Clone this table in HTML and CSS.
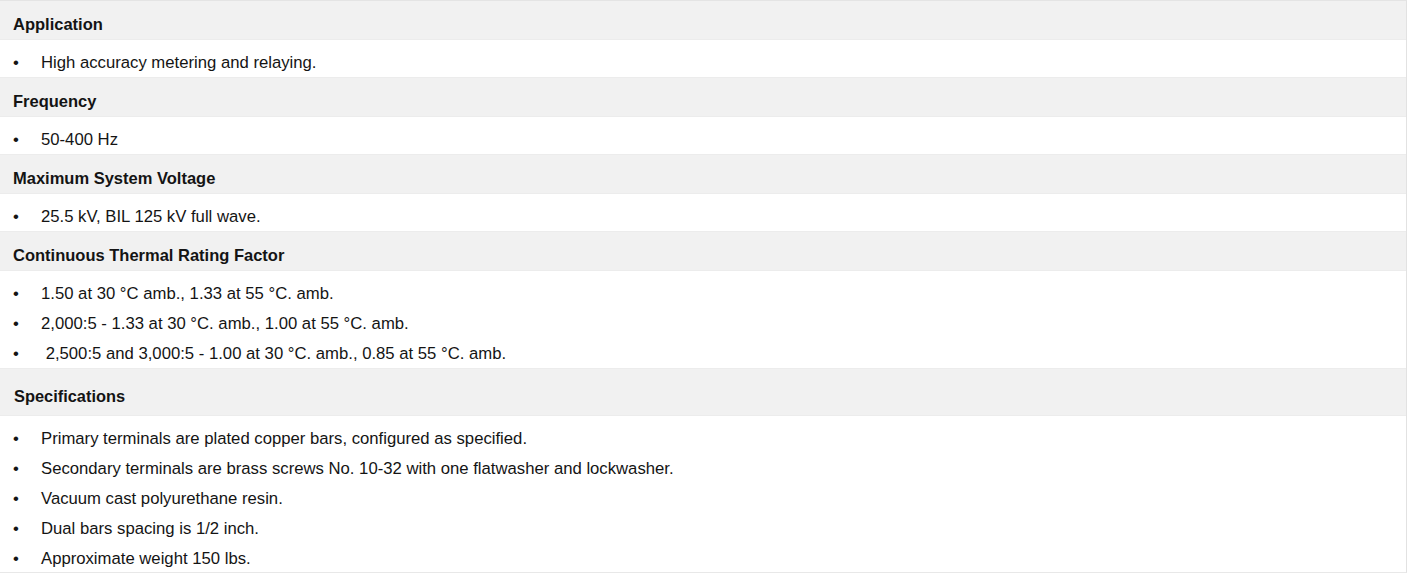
FILE: index.html
```html
<!DOCTYPE html>
<html>
<head>
<meta charset="utf-8">
<link rel="stylesheet" href="styles.css">
</head>
<body>
<div class="spec">
  <div class="head">Application</div>
  <ul class="body"><li>High accuracy metering and relaying.</li></ul>
  <div class="head">Frequency</div>
  <ul class="body"><li>50-400 Hz</li></ul>
  <div class="head">Maximum System Voltage</div>
  <ul class="body"><li>25.5 kV, BIL 125 kV full wave.</li></ul>
  <div class="head">Continuous Thermal Rating Factor</div>
  <ul class="body">
    <li>1.50 at 30 °C amb., 1.33 at 55 °C. amb.</li>
    <li>2,000:5 - 1.33 at 30 °C. amb., 1.00 at 55 °C. amb.</li>
    <li>&nbsp;2,500:5 and 3,000:5 - 1.00 at 30 °C. amb., 0.85 at 55 °C. amb.</li>
  </ul>
  <div class="head head-tall">Specifications</div>
  <ul class="body body-narrow">
    <li>Primary terminals are plated copper bars, configured as specified.</li>
    <li>Secondary terminals are brass screws No. 10-32 with one flatwasher and lockwasher.</li>
    <li>Vacuum cast polyurethane resin.</li>
    <li>Dual bars spacing is 1/2 inch.</li>
    <li>Approximate weight 150 lbs.</li>
  </ul>
</div>
</body>
</html>
```

FILE: styles.css
```css
html, body {
  margin: 0;
  padding: 0;
  background: #ffffff;
}
body {
  font-family: "Liberation Sans", Arial, sans-serif;
  color: #141414;
}
.spec {
  width: 1406px;
  border-top: 1px solid #e4e4e4;
  border-right: 1px solid #e2e2e2;
  border-bottom: 1px solid #e8e8e8;
}
.head {
  background: #f1f1f1;
  font-weight: bold;
  font-size: 16.5px;
  box-sizing: border-box;
  height: 39px;
  padding-top: 4px;
  line-height: 38px;
  padding-left: 13px;
  border-bottom: 1px solid #ececec;
  overflow: hidden;
}
.head-tall {
  height: 47px;
  padding-top: 8px;
  padding-left: 14px;
  font-size: 16.4px;
}
.body {
  list-style: none;
  margin: 0;
  padding: 4px 0 3px 0;
  font-size: 16.7px;
  border-bottom: 1px solid #ececec;
}
.body li {
  box-sizing: border-box;
  height: 30px;
  padding-top: 8px;
  line-height: 22px;
  position: relative;
  padding-left: 41px;
}
.body li::before {
  content: "•";
  position: absolute;
  left: 13px;
  top: 8px;
}
.body-narrow {
  padding-top: 4px;
  padding-bottom: 2px;
}
.body-narrow:last-child {
  border-bottom: none;
}
```
